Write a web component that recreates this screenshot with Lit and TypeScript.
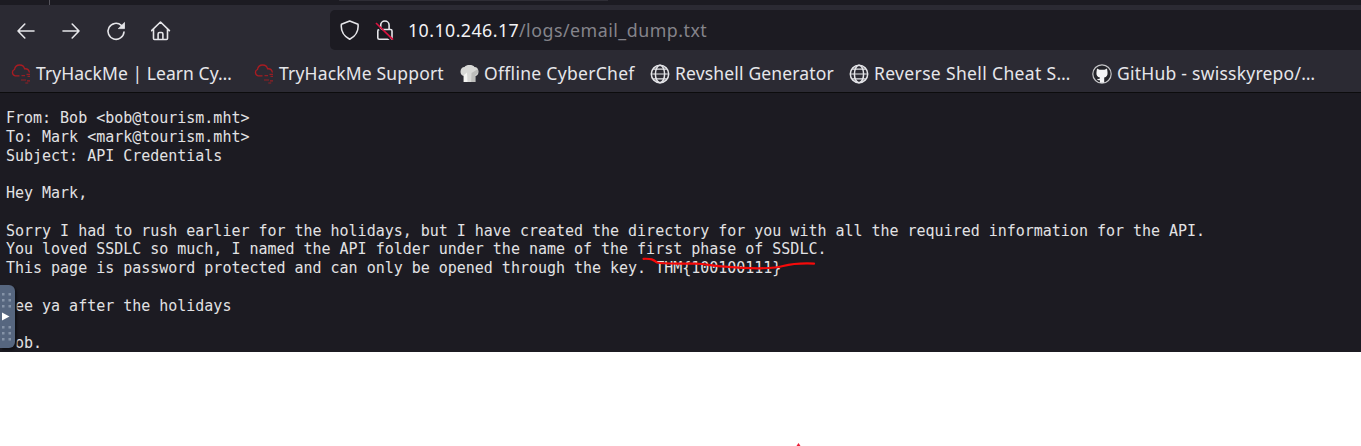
import { LitElement, html, svg, css } from "lit";
import { customElement } from "lit/decorators.js";

const cloud = html`<svg class="ico" width="20" height="20" viewBox="0 0 20 20" fill="none" stroke="#a81c22" stroke-width="1.3">
  <path d="M8.500 11.800H4.200A3.300 3.300 0 0 1 3.500 5.500C4 2.600 6 1 8.700 1c2.600 0 4.300 1.400 4.900 3.800 2.400-.2 4.400 1.200 4.800 3.700"/>
  <path d="M10.500 11.600h3.500M15.500 10.300h3.500M10 16h5M16.500 12.300h2.500M16 16.800h3M14.300 19h3" stroke-width="1.200" opacity=".85"/></svg>`;
const hat = html`<svg class="ico" width="19" height="20" viewBox="0 0 19 20">
  <path d="M3.500 18V12C1.200 11.500.5 9.500.5 7.500.5 5 2.300 3 4.500 3 5.500 1.600 7.300 1 9.500 1s4.200.6 5 2c2.300 0 4 2 4 4.500s-.9 4-3 4.500v6z" fill="#d8d8d6"/>
  <path d="M4 11v7h3.500l-.5-9.500z" fill="#f4f4f2"/><path d="M11.500 9l-.3 9H15v-6.500l3-2.500V5z" fill="#bdbdbb"/></svg>`;
const globe = html`<svg class="ico" width="20" height="20" viewBox="0 0 20 20" fill="none" stroke="#e4e4e8" stroke-width="1.500">
  <circle cx="10" cy="10" r="8.700"/><ellipse cx="10" cy="10" rx="4.600" ry="8.700"/><path d="M1.300 10h17.400M3.500 5.200h13M3.500 14.800h13" stroke-width="1.200"/></svg>`;
const github = html`<svg class="ico" width="20" height="20" viewBox="0 0 20 20">
  <circle cx="10" cy="10" r="9.200" fill="#24242a" stroke="#c5c5c8" stroke-width="1.200"/>
  <path d="M5 4.500l2.500 1.200h5L15 4.500l.5 3.500c.4 3.200-.8 5-3.300 5.500v5.300H7.900v-2.500c-1.500.2-2.300-.4-3-1.500 1 .2 1.800.5 3-.2v-1.100C5.300 13 4 11.300 4.500 8z" fill="#f4f4f6"/></svg>`;

const bookmarks = [
  { cls: "b1", icon: cloud, title: "TryHackMe | Learn Cy…" },
  { cls: "b2", icon: cloud, title: "TryHackMe Support" },
  { cls: "b3", icon: hat, title: "Offline CyberChef" },
  { cls: "b4", icon: globe, title: "Revshell Generator" },
  { cls: "b5", icon: globe, title: "Reverse Shell Cheat S…" },
  { cls: "b6", icon: github, title: "GitHub - swisskyrepo/…" },
];

const mail = `From: Bob <bob@tourism.mht>
To: Mark <mark@tourism.mht>
Subject: API Credentials

Hey Mark,

Sorry I had to rush earlier for the holidays, but I have created the directory for you with all the required information for the API.
You loved SSDLC so much, I named the API folder under the name of the first phase of SSDLC.
This page is password protected and can only be opened through the key. THM{100100111}

See ya after the holidays

Bob.`;

@customElement("app-root")
export class AppRoot extends LitElement {
  static styles = css`
    :host { display: block; position: relative; width: 1361px; height: 446px; overflow: hidden; background: #fff; }
    * { box-sizing: border-box; }
    .window { height: 352px; overflow: hidden; background: #1c1b22; display: flex; flex-direction: column; }
    .tabs { height: 5px; flex: none; display: flex; background: #1c1b22; }
    .tabs .first { width: 50px; border-right: 1px solid #55545c; }
    .tabs .edge { margin-left: 289px; width: 269px; height: 1px; background: #2e2d35; }
    .chrome { flex: none; height: 88px; background: #2b2a33; border-bottom: 1px solid #0c0c0d; font-family: "Noto Sans", sans-serif; color: #e6e6ea; }
    .nav { display: flex; height: 50px; padding-top: 5px; }
    .buttons { width: 330px; height: 40px; padding-left: 16px; display: flex; gap: 25px; align-items: center; padding-top: 2px; }
    .buttons svg { flex: none; }
    .url { flex: 1; height: 40px; background: #1c1b22; border-radius: 5px 0 0 5px; display: flex; align-items: center; padding-left: 10px; white-space: pre; font-size: 17.800px; }
    .shield { margin-right: 15px; }
    .lock { margin-right: 13px; }
    .host { width: 111px; color: #f2f2f5; letter-spacing: 0.440px; }
    .path { color: #85848b; letter-spacing: 0.500px; }
    .marks { display: flex; height: 37px; align-items: center; white-space: pre; font-size: 17.500px; }
    .mark { display: flex; align-items: center; flex: none; }
    .mark span { position: relative; top: -0.500px; }
    .ico { flex: none; margin-right: 5px; }
    .b1 { width: 243px; margin-left: 11px; letter-spacing: 0.060px; }
    .b2 { width: 206px; letter-spacing: 0.170px; }
    .b3 { width: 190px; letter-spacing: 0.300px; }
    .b4 { width: 199px; letter-spacing: 0.160px; }
    .b5 { width: 243px; letter-spacing: 0.350px; }
    .b6 { letter-spacing: 0.240px; }
    pre { margin: 0; padding: 16px 0 0 6px; color: #e2e2e4; font: 15px/18.750px "DejaVu Sans Mono", monospace; letter-spacing: -0.015px; }
    .handle { position: absolute; left: 0; top: 285px; width: 15px; height: 63px; background: #56667f; border-radius: 0 6px 6px 0; box-shadow: 2px 2px 2px #101015; }
    .handle svg { display: block; }
    .stroke { position: absolute; left: 635px; top: 250px; }
    .dot { position: absolute; left: 796px; top: 443px; }
  `;

  private dots() {
    return [9, 15, 21, 42, 48, 54].map((y) => [2, 8.5].map((x) => svg`<rect x=${x} y=${y - 1} width="2.500" height="2.500" fill="#8593a8"/>`));
  }

  render() {
    return html`
      <div class="window">
        <div class="tabs"><div class="first"></div><div class="edge"></div></div>
        <div class="chrome">
          <div class="nav">
            <div class="buttons">
              <svg width="20" height="20" viewBox="0 0 20 20" fill="none" stroke="#e6e6ea" stroke-width="1.600" stroke-linecap="round" stroke-linejoin="round"><path d="M18 10H2M8.800 3L2 10l6.800 7"/></svg>
              <svg width="20" height="20" viewBox="0 0 20 20" fill="none" stroke="#e6e6ea" stroke-width="1.600" stroke-linecap="round" stroke-linejoin="round"><path d="M2 10h16M11.200 3L18 10l-6.800 7"/></svg>
              <svg width="20" height="20" viewBox="0 0 20 20" fill="none" stroke="#e6e6ea" stroke-width="1.600" stroke-linecap="round"><path d="M18 11A8 8 0 1 1 15.300 4.300"/><path d="M18.500 1.800v5.800h-5.800z" fill="#e6e6ea" stroke-width=".8"/></svg>
              <svg width="20" height="20" viewBox="0 0 20 20" fill="none" stroke="#e6e6ea" stroke-width="1.600" stroke-linecap="round" stroke-linejoin="round"><path d="M.6 9.600L9.500 1l8.900 8.600M2.500 8v9.500q0 1 1 1h12q1 0 1-1V8M7.100 18.500V13q0-1.500 1.500-1.500h1.800q1.500 0 1.500 1.500v5.500"/></svg>
            </div>
            <div class="url">
              <svg class="shield" width="20" height="20" viewBox="0 0 20 20" fill="none" stroke="#e6e6ea" stroke-width="1.600" stroke-linejoin="round"><path d="M9.700 1L18 4.300c.8 6.500-2.600 12.200-8.300 15C4 16.500.6 10.800 1.400 4.300z"/></svg>
              <svg class="lock" width="20" height="20" viewBox="0 0 20 20" fill="none" stroke="#e6e6ea" stroke-width="1.600"><rect x="2.800" y="9.500" width="14.200" height="9.700" rx="1.500"/><path d="M5.700 9.500V5.200A4.200 4.200 0 0 1 14.100 5.200V9.500"/><path d="M.2 4.500L16.200 20.500" stroke="#1c1b22" stroke-width="1.600"/><path d="M1 3L18 19.700" stroke="#d9123f" stroke-width="1.700"/></svg>
              <span class="host">10.10.246.17</span><span class="path">/logs/email_dump.txt</span>
            </div>
          </div>
          <div class="marks">${bookmarks.map((b) => html`<div class="mark ${b.cls}">${b.icon}<span>${b.title}</span></div>`)}</div>
        </div>
        <pre>${mail}</pre>
      </div>
      <div class="handle"><svg width="15" height="63" viewBox="0 0 15 63">${this.dots()}<path d="M2 27.500L9.500 31.500 2 35.500z" fill="#fff"/></svg></div>
      <svg class="stroke" width="190" height="25" viewBox="0 0 190 25" fill="none" stroke="#f50a0a" stroke-width="2.200" stroke-linecap="round" stroke-linejoin="round"><path d="M8.500 8.800C17 8.500 18 9.500 22 12.500 29 14 45 13.500 60 13.700 73 13.800 76 16 90 16.700 106 18 127 19 140 17.500 150 16.500 153 12.500 179 13.600"/></svg>
      <svg class="dot" width="5" height="3"><path d="M2.500 0L4.500 3H.5z" fill="#ed1c35"/></svg>
    `;
  }
}
